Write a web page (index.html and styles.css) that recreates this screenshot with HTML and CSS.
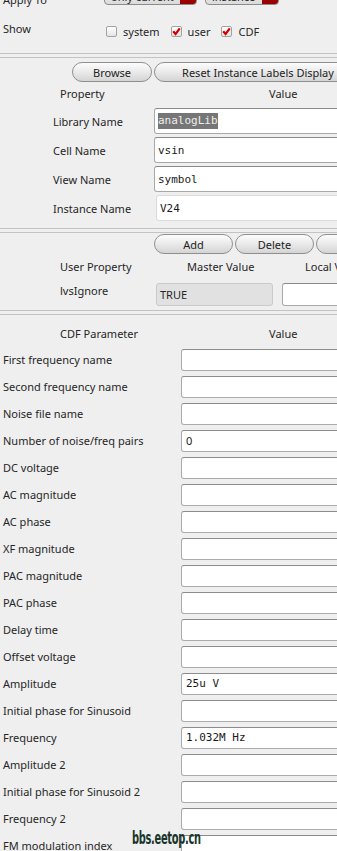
FILE: index.html
```html
<!DOCTYPE html>
<html lang="en">
<head>
    <meta charset="UTF-8">
    <meta name="viewport" content="width=device-width, initial-scale=1.0">
    <title>Edit Object Properties</title>
    <link rel="stylesheet" href="styles.css">
</head>
<body>
    <div class="page">
        <div class="inner">
            <div class="panel top-panel">
                <div class="apply-row">
                    <span class="apply-label">Apply To</span>
                    <div class="combo combo-scope"><span class="combo-text">only current</span><span class="combo-arrow"></span></div>
                    <div class="combo combo-what"><span class="combo-text">instance</span><span class="combo-arrow"></span></div>
                </div>
                <div class="show-row">
                    <span class="show-label">Show</span>
                    <label class="opt"><span class="check"></span>system</label>
                    <label class="opt"><span class="check"><svg viewBox="0 0 11 11" width="11" height="11"><path d="M2.2 5.2 L4.6 8 L8.8 2.4" fill="none" stroke="#d40000" stroke-width="2.2"/></svg></span>user</label>
                    <label class="opt"><span class="check"><svg viewBox="0 0 11 11" width="11" height="11"><path d="M2.2 5.2 L4.6 8 L8.8 2.4" fill="none" stroke="#d40000" stroke-width="2.2"/></svg></span>CDF</label>
                </div>
            </div>

            <div class="panel inst-panel">
                <div class="btn-row inst-buttons">
                    <button class="btn btn-browse">Browse</button>
                    <button class="btn btn-reset">Reset Instance Labels Display</button>
                </div>
                <div class="head inst-head">
                    <span class="head-first">Property</span>
                    <span>Value</span>
                </div>
                <div class="prop-row">
                    <span class="prop-label">Library Name</span>
                    <div class="field"><span class="selected">analogLib</span></div>
                </div>
                <div class="prop-row">
                    <span class="prop-label">Cell Name</span>
                    <div class="field">vsin</div>
                </div>
                <div class="prop-row">
                    <span class="prop-label">View Name</span>
                    <div class="field">symbol</div>
                </div>
                <div class="prop-row">
                    <span class="prop-label">Instance Name</span>
                    <div class="field field-inst">V24</div>
                </div>
            </div>

            <div class="panel user-panel">
                <div class="btn-row user-buttons">
                    <button class="btn btn-small">Add</button>
                    <button class="btn btn-small">Delete</button>
                    <button class="btn btn-small">Modify</button>
                </div>
                <div class="head user-head">
                    <span class="head-user">User Property</span>
                    <span class="head-master">Master Value</span>
                    <span class="head-local">Local Value</span>
                </div>
                <div class="user-row">
                    <span class="user-label">lvsIgnore</span>
                    <div class="master">TRUE</div>
                    <div class="field field-local"></div>
                </div>
            </div>

            <div class="panel cdf-panel">
                <div class="head cdf-head">
                    <span class="head-first">CDF Parameter</span>
                    <span>Value</span>
                </div>
                <div class="cdf-row"><span class="cdf-label">First frequency name</span><div class="cdf-field"></div></div>
                <div class="cdf-row"><span class="cdf-label">Second frequency name</span><div class="cdf-field"></div></div>
                <div class="cdf-row"><span class="cdf-label">Noise file name</span><div class="cdf-field"></div></div>
                <div class="cdf-row"><span class="cdf-label">Number of noise/freq pairs</span><div class="cdf-field sans">0</div></div>
                <div class="cdf-row"><span class="cdf-label">DC voltage</span><div class="cdf-field"></div></div>
                <div class="cdf-row"><span class="cdf-label">AC magnitude</span><div class="cdf-field"></div></div>
                <div class="cdf-row"><span class="cdf-label">AC phase</span><div class="cdf-field"></div></div>
                <div class="cdf-row"><span class="cdf-label">XF magnitude</span><div class="cdf-field"></div></div>
                <div class="cdf-row"><span class="cdf-label">PAC magnitude</span><div class="cdf-field"></div></div>
                <div class="cdf-row"><span class="cdf-label">PAC phase</span><div class="cdf-field"></div></div>
                <div class="cdf-row"><span class="cdf-label">Delay time</span><div class="cdf-field"></div></div>
                <div class="cdf-row"><span class="cdf-label">Offset voltage</span><div class="cdf-field"></div></div>
                <div class="cdf-row"><span class="cdf-label">Amplitude</span><div class="cdf-field">25u V</div></div>
                <div class="cdf-row"><span class="cdf-label">Initial phase for Sinusoid</span><div class="cdf-field"></div></div>
                <div class="cdf-row"><span class="cdf-label">Frequency</span><div class="cdf-field">1.032M Hz</div></div>
                <div class="cdf-row"><span class="cdf-label">Amplitude 2</span><div class="cdf-field"></div></div>
                <div class="cdf-row"><span class="cdf-label">Initial phase for Sinusoid 2</span><div class="cdf-field"></div></div>
                <div class="cdf-row"><span class="cdf-label">Frequency 2</span><div class="cdf-field"></div></div>
                <div class="cdf-row"><span class="cdf-label">FM modulation index</span><div class="cdf-field"></div></div>
            </div>
        </div>
        <div class="watermark">bbs.eetop.cn</div>
    </div>
</body>
</html>
```

FILE: styles.css
```css
* {
    box-sizing: border-box;
    margin: 0;
    padding: 0;
}
body {
    background-color: #EFEFEF;
    font-family: "Noto Sans", "Open Sans", sans-serif;
    font-size: 11px;
    color: #262626;
    overflow: hidden;
}
.page {
    width: 337px;
    height: 851px;
    overflow: hidden;
    position: relative;
}
.inner {
    margin-top: -16px;
}
.panel {
    border-top: 1px solid #C3C3C3;
    border-bottom: 1px solid #C3C3C3;
    margin-bottom: 3px;
}
.apply-label, .show-label, .prop-label, .user-label, .cdf-label, .head span {
    flex: none;
    white-space: nowrap;
}

/* top: apply to / show */
.top-panel {
    height: 70px;
}
.apply-row {
    display: flex;
    align-items: center;
    height: 20px;
}
.apply-label {
    width: 104px;
    padding-left: 3px;
    padding-top: 9px;
}
.combo {
    flex: none;
    display: flex;
    height: 20px;
    border: 1px solid #8C8C8C;
    border-radius: 4px;
    overflow: hidden;
    background: linear-gradient(#FAFAFA, #DADADA);
}
.combo-scope {
    width: 93px;
}
.combo-what {
    width: 74px;
    margin-left: 8px;
}
.combo-text {
    flex-grow: 1;
    padding: 3px 0 0 6px;
    line-height: 16px;
    white-space: nowrap;
}
.combo-arrow {
    flex: none;
    width: 16px;
    background: linear-gradient(#C40000, #920000);
}
.show-row {
    display: flex;
    align-items: center;
    height: 12px;
    margin-top: 20px;
}
.show-label {
    width: 106px;
    padding-left: 3px;
    margin-top: -6px;
}
.opt {
    flex: none;
    display: flex;
    align-items: center;
    margin-right: 11px;
}
.check {
    display: block;
    width: 11px;
    height: 11px;
    margin-right: 6px;
    border: 1px solid #A2A2A2;
    border-radius: 2px;
    background: linear-gradient(#FFFFFF, #E4E4E4);
    overflow: hidden;
}
.check svg {
    display: block;
    margin: -1px 0 0 -1px;
}

/* buttons */
.btn-row {
    display: flex;
    height: 20px;
    gap: 2px;
}
.btn {
    flex: none;
    height: 20px;
    border: 1px solid #8F8F8F;
    border-radius: 10px;
    background: linear-gradient(#FCFCFC, #EAEAEA 50%, #D4D4D4);
    font-family: "Noto Sans", "Open Sans", sans-serif;
    font-size: 11px;
    color: #222;
    white-space: nowrap;
}
.btn-browse {
    width: 80px;
}
.btn-reset {
    width: 208px;
}
.btn-small {
    width: 79px;
}
.head {
    display: flex;
    align-items: center;
    padding-left: 60px;
}
.head-first {
    width: 209px;
}

/* instance properties */
.inst-panel {
    height: 172px;
    padding-top: 4px;
}
.inst-buttons {
    padding-left: 72px;
}
.inst-head {
    height: 23px;
}
.prop-row {
    display: flex;
    align-items: center;
    height: 26px;
    margin-top: 3px;
}
.prop-label {
    width: 154px;
    padding-left: 53px;
}
.field {
    flex: none;
    width: 250px;
    height: 26px;
    display: flex;
    align-items: center;
    padding-left: 3px;
    background-color: #FFFFFF;
    border: 1px solid #A8A8A8;
    border-top-color: #8A8A8A;
    border-radius: 3px;
    font-family: "DejaVu Sans Mono", monospace;
    font-size: 11px;
    color: #1A1A1A;
}
.field-inst {
    margin-left: 2px;
    border-color: #DADADA;
}
.selected {
    background-color: #767676;
    color: #EEEEEE;
    line-height: 16px;
}

/* user properties */
.user-panel {
    height: 79px;
    padding-top: 1px;
}
.user-buttons {
    padding-left: 154px;
}
.user-head {
    height: 25px;
}
.head .head-user {
    width: 127px;
}
.head .head-master {
    width: 118px;
}
.head .head-local {
    width: 32px;
    overflow: hidden;
}
.user-row {
    display: flex;
    align-items: center;
    height: 23px;
    margin-top: 4px;
}
.user-label {
    width: 156px;
    padding-left: 60px;
    padding-bottom: 9px;
}
.master {
    flex: none;
    width: 117px;
    height: 23px;
    line-height: 21px;
    padding-left: 3px;
    background-color: #E1E1E1;
    border: 1px solid #CACACA;
    border-radius: 3px;
}
.field-local {
    width: 120px;
    height: 23px;
    margin-left: 9px;
}

/* cdf parameters */
.cdf-panel {
    border-bottom: none;
}
.cdf-head {
    height: 34px;
    padding-top: 2px;
}
.cdf-row {
    display: flex;
    align-items: flex-start;
    height: 27px;
}
.cdf-label {
    width: 181px;
    padding-left: 3px;
    line-height: 22px;
}
.cdf-field {
    flex: none;
    width: 200px;
    height: 22px;
    line-height: 20px;
    padding-left: 4px;
    background-color: #FFFFFF;
    border: 1px solid #ABABAB;
    border-top-color: #8C8C8C;
    border-radius: 3px;
    font-family: "DejaVu Sans Mono", monospace;
    font-size: 11px;
    color: #1A1A1A;
}
.cdf-field.sans {
    font-family: "Noto Sans", "Open Sans", sans-serif;
}

.watermark {
    position: absolute;
    left: 132px;
    top: 828px;
    font-family: "DejaVu Sans", sans-serif;
    font-weight: 700;
    font-size: 17px;
    letter-spacing: -0.5px;
    color: #17352A;
    transform: scaleX(0.58);
    transform-origin: left top;
}
```
